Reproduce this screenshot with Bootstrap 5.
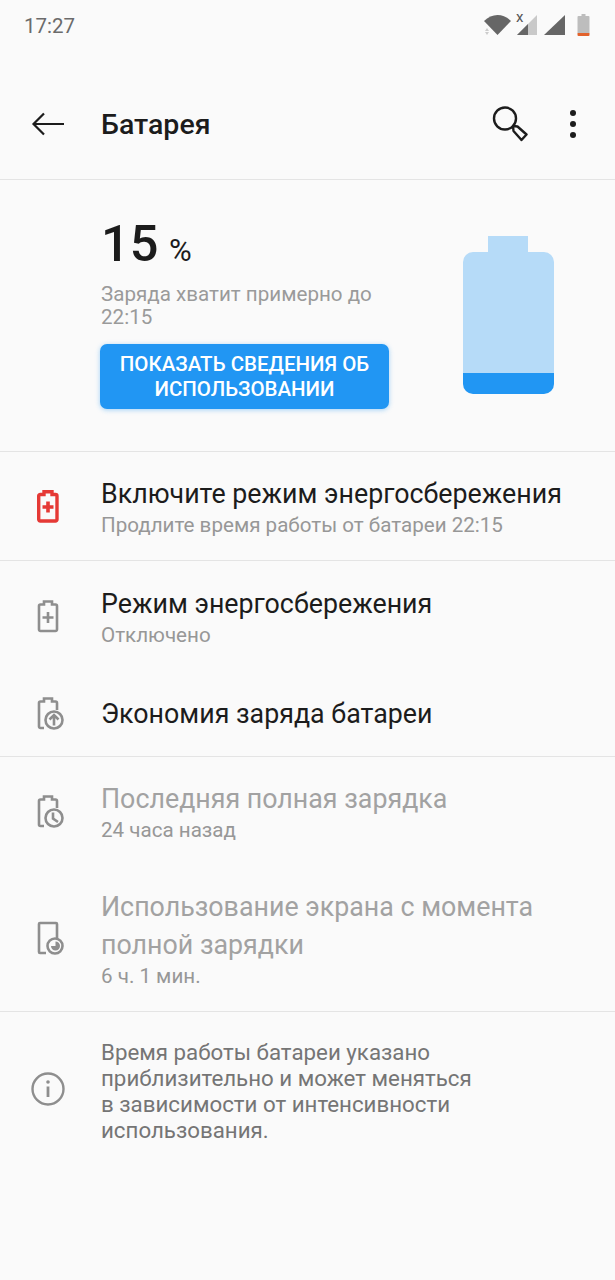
<!DOCTYPE html>
<html lang="ru">
<head>
    <meta charset="UTF-8">
    <meta name="viewport" content="width=device-width, initial-scale=1.0">
    <title>Батарея</title>
    <link href="https://cdn.jsdelivr.net/npm/bootstrap@5.3.1/dist/css/bootstrap.min.css" rel="stylesheet">
    <style>
        body {
            font-family: Roboto, sans-serif;
            background-color: #fafafa;
            color: #1c1c1c;
            width: 615px;
            height: 1280px;
            overflow: hidden;
        }
        .status-row {
            height: 52px;
            padding: 0 24px;
            font-size: 20.5px;
            color: #6b6b6b;
        }
        .status-icons { padding-bottom: 9px; }
        .top-bar {
            height: 128px;
            padding: 20px 38px 0 31px;
            border-bottom: 1px solid #e4e4e4;
        }
        .top-title {
            font-size: 28.5px;
            font-weight: 500;
            margin-left: 37px;
        }
        .more-dots { margin-left: 41px; }
        .hero {
            height: 272px;
            padding: 32px 61px 0 100px;
            border-bottom: 1px solid #e4e4e4;
        }
        .hero-left { width: 289px; }
        .big-num {
            font-size: 50.5px;
            font-weight: 500;
            line-height: 64px;
            padding-left: 1px;
            word-spacing: -2px;
        }
        .big-unit {
            font-size: 31px;
            font-weight: 400;
        }
        .hero-note {
            font-size: 20.6px;
            line-height: 23px;
            color: #9a9a9a;
            margin: 0 0 15px 1px;
        }
        .usage-btn {
            display: block;
            width: 289px;
            height: 65px;
            padding: 8px 8px;
            background-color: #2196f3;
            border: 0;
            border-radius: 7px;
            color: #fff;
            font-size: 20.5px;
            font-weight: 500;
            line-height: 25px;
            box-shadow: 0 1px 5px rgba(33, 150, 243, .4);
        }
        .usage-btn:hover { background-color: #2196f3; color: #fff; }
        .batt-pic { margin-top: 24px; }
        .item-row {
            display: flex;
            align-items: center;
        }
        .item-icon {
            width: 101px;
            padding-left: 37px;
            flex-shrink: 0;
        }
        .item-icon-wide { padding-left: 31px; }
        .item-title {
            font-size: 26.8px;
            line-height: 38px;
        }
        .item-sub {
            font-size: 20.6px;
            line-height: 25px;
            color: #979797;
        }
        .muted-text { color: #a2a2a2; }
        .sep { border-bottom: 1px solid #e4e4e4; }
        .row-save { height: 109px; }
        .row-mode { height: 106px; padding-top: 4px; }
        .row-saver { height: 90px; padding-top: 4px; }
        .row-last { height: 107px; padding-top: 1px; }
        .row-screen { height: 148px; padding-top: 1px; }
        .row-note { padding-top: 27px; }
        .note-text {
            font-size: 22.3px;
            line-height: 26px;
            color: #757575;
        }
    </style>
</head>
<body>

    <div class="status-row d-flex justify-content-between align-items-center">
        <span>17:27</span>
        <div class="status-icons d-flex align-items-end">
            <svg width="85" height="29" viewBox="0 -7 85 29">
                <path d="M0 7C8-1 19-1 27 7L13.500 21Z" fill="#666"/>
                <path d="M1 17l2-3 2 3zM1 18h4l-2 3z" fill="#ccc"/>
                <path d="M53 1V21H33Z" fill="#c9c9c9"/>
                <path d="M44 10V21H33Z" fill="#666"/>
                <text x="32" y="8" font-size="15" fill="#555" font-family="Roboto, sans-serif">x</text>
                <path d="M81 1V21H60Z" fill="#666"/>
            </svg>
            <svg class="ms-2" width="14" height="22" viewBox="0 0 14 22">
                <path d="M.5 3a1 1 0 0 1 1-1h3V0h4v2h3a1 1 0 0 1 1 1V19H.5Z" fill="#bdbdbd"/>
                <path d="M.5 19h12v2a1 1 0 0 1-1 1h-10a1 1 0 0 1-1-1Z" fill="#e2622c"/>
            </svg>
        </div>
    </div>

    <div class="top-bar d-flex align-items-center">
        <svg class="mb-1" width="33" height="26" viewBox="0 0 33 26" fill="none" stroke="#1c1c1c" stroke-width="2.200">
            <path d="M33 13H3M13 2.500 2.500 13 13 23.500"/>
        </svg>
        <div class="top-title flex-grow-1">Батарея</div>
        <svg class="mb-1" width="36" height="36" viewBox="0 0 36 36" fill="none" stroke="#1c1c1c" stroke-width="2.400">
            <circle cx="13" cy="12.500" r="11"/>
            <path d="M21 20 25.500 20.500 34.500 28.500 29.500 34 21.500 25Z" stroke-linejoin="round"/>
        </svg>
        <svg class="more-dots mb-1" width="8" height="30" viewBox="0 0 8 30" fill="#1c1c1c">
            <circle cx="4" cy="4" r="3"/><circle cx="4" cy="15" r="3"/><circle cx="4" cy="26" r="3"/>
        </svg>
    </div>

    <div class="hero d-flex justify-content-between">
        <div class="hero-left">
            <div class="big-num">15 <span class="big-unit">%</span></div>
            <div class="hero-note">Заряда хватит примерно до<br>22:15</div>
            <button class="btn usage-btn">ПОКАЗАТЬ СВЕДЕНИЯ ОБ ИСПОЛЬЗОВАНИИ</button>
        </div>
        <svg class="batt-pic" width="91" height="158" viewBox="0 0 91 158">
            <path d="M25 0h40v16h16a10 10 0 0 1 10 10v111H0V26a10 10 0 0 1 10-10h15Z" fill="#b6dbf8"/>
            <path d="M0 137h91v11a10 10 0 0 1-10 10H10a10 10 0 0 1-10-10Z" fill="#2196f3"/>
        </svg>
    </div>

    <div class="item-row sep row-save">
        <div class="item-icon">
            <svg width="22" height="33" viewBox="0 0 22 33" fill="none" stroke="#e53935" stroke-width="3.400">
                <path d="M3.500 4.500h3.500V1.700h8v2.800h3.500a1.500 1.500 0 0 1 1.500 1.500v23.500a1.500 1.500 0 0 1-1.500 1.500H3.500A1.500 1.500 0 0 1 1.700 29.500V6a1.500 1.500 0 0 1 1.800-1.500Z"/>
                <path d="M5.500 17h11M11 11.500v11" stroke-width="3.600"/>
            </svg>
        </div>
        <div>
            <div class="item-title">Включите режим энергосбережения</div>
            <div class="item-sub">Продлите время работы от батареи 22:15</div>
        </div>
    </div>

    <div class="item-row row-mode">
        <div class="item-icon">
            <svg width="22" height="33" viewBox="0 0 22 33" fill="none" stroke="#8e8e8e" stroke-width="2.600">
                <path d="M3.500 4.500h3.500V1.500h8v3h3.500a1.500 1.500 0 0 1 1.500 1.500v23.500a1.500 1.500 0 0 1-1.500 1.500H3.500A1.500 1.500 0 0 1 2 29.500V6a1.500 1.500 0 0 1 1.500-1.500Z"/>
                <path d="M5.500 17.500h11M11 12v11"/>
            </svg>
        </div>
        <div>
            <div class="item-title">Режим энергосбережения</div>
            <div class="item-sub">Отключено</div>
        </div>
    </div>

    <div class="item-row sep row-saver">
        <div class="item-icon">
            <svg width="27" height="33" viewBox="0 0 27 33" fill="none" stroke="#8e8e8e" stroke-width="2.600">
                <path d="M7 31H3.500A1.500 1.500 0 0 1 2 29.500V6a1.500 1.500 0 0 1 1.500-1.500h3.500V1.500h8v3h3.500A1.500 1.500 0 0 1 20 6v7"/>
                <circle cx="17" cy="23" r="8.500"/>
                <path d="M17 28.500V18M12.500 22.500l4.500-4.500 4.500 4.500"/>
            </svg>
        </div>
        <div class="item-title">Экономия заряда батареи</div>
    </div>

    <div class="item-row row-last">
        <div class="item-icon">
            <svg width="27" height="34" viewBox="0 0 27 34" fill="none" stroke="#8e8e8e" stroke-width="2.600">
                <path d="M7 32H3.500A1.500 1.500 0 0 1 2 30.500V7a1.500 1.500 0 0 1 1.500-1.500h3.500V2.500h8v3h3.500A1.500 1.500 0 0 1 20 7v7"/>
                <circle cx="17" cy="24" r="8.500"/>
                <path d="M16 18.500V24.500L21 28"/>
            </svg>
        </div>
        <div>
            <div class="item-title muted-text">Последняя полная зарядка</div>
            <div class="item-sub">24 часа назад</div>
        </div>
    </div>

    <div class="item-row sep row-screen">
        <div class="item-icon">
            <svg width="27" height="34" viewBox="0 0 27 34" fill="none" stroke="#8e8e8e" stroke-width="2.600">
                <path d="M9 32H3a1 1 0 0 1-1-1V3a1 1 0 0 1 1-1h16a1 1 0 0 1 1 1v14"/>
                <circle cx="18" cy="25" r="7.500"/>
                <path d="M18.500 25V20.500A4.500 4.500 0 1 1 14 25Z" fill="#8e8e8e" stroke="none"/>
            </svg>
        </div>
        <div>
            <div class="item-title muted-text">Использование экрана с момента<br>полной зарядки</div>
            <div class="item-sub">6 ч. 1 мин.</div>
        </div>
    </div>

    <div class="item-row row-note">
        <div class="item-icon item-icon-wide pb-1">
            <svg width="34" height="34" viewBox="0 0 34 34" fill="none" stroke="#8e8e8e" stroke-width="2.400">
                <circle cx="17" cy="17" r="15.500"/>
                <path d="M17 14.500V25" stroke-width="2.800"/>
                <circle cx="17" cy="10" r="1.800" fill="#8e8e8e" stroke="none"/>
            </svg>
        </div>
        <div class="note-text">Время работы батареи указано<br>приблизительно и может меняться<br>в зависимости от интенсивности<br>использования.</div>
    </div>

    <script src="https://cdn.jsdelivr.net/npm/bootstrap@5.3.1/dist/js/bootstrap.bundle.min.js"></script>
</body>
</html>
